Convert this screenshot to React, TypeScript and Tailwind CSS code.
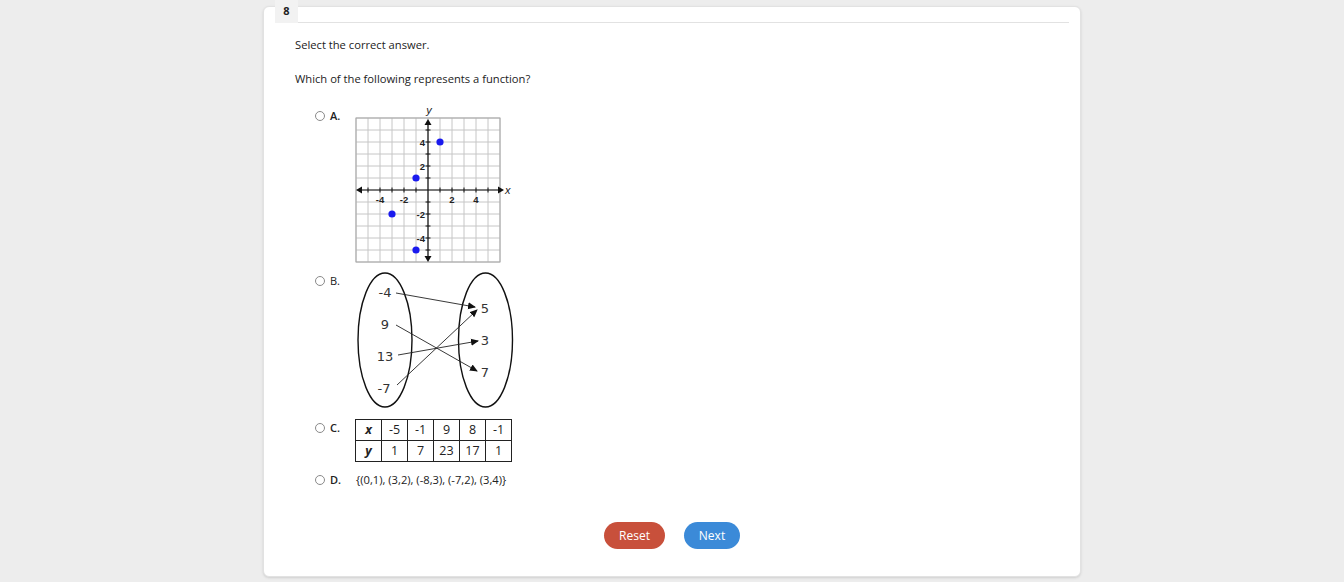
import React from "react";

const font = { fontFamily: '"Open Sans", "Liberation Sans", sans-serif' };

const Radio: React.FC = () => (
  <span className="inline-block w-[10px] h-[10px] rounded-full border border-[#8a8a8a] bg-white shrink-0" />
);

const OptionLabel: React.FC<{ letter: string; bold?: boolean }> = ({ letter, bold = true }) => (
  <div className="flex items-center gap-[5px] h-4 text-[11px] text-[#222]">
    <Radio />
    <span className={bold ? "font-semibold" : "font-normal"}>{letter}.</span>
  </div>
);

// Option A: coordinate grid with four points
const Graph: React.FC = () => {
  const ox = 77;
  const oy = 86;
  const u = 12;
  const lines = Array.from({ length: 13 }, (_, i) => i);
  const ticks = Array.from({ length: 11 }, (_, i) => i - 5).filter((v) => v !== 0);
  const pts: [number, number][] = [
    [1, 4],
    [-1, 1],
    [-3, -2],
    [-1, -5],
  ];
  return (
    <svg width="170" height="166" viewBox="0 0 170 166">
      {lines.map((i) => (
        <line key={"v" + i} x1={5 + i * u} y1={14} x2={5 + i * u} y2={158} stroke="#c6c6c6" strokeWidth="1" />
      ))}
      {lines.map((i) => (
        <line key={"h" + i} x1={5} y1={14 + i * u} x2={149} y2={14 + i * u} stroke="#c6c6c6" strokeWidth="1" />
      ))}
      <rect x="5" y="14" width="144" height="144" fill="none" stroke="#a8a8a8" strokeWidth="1" />
      {/* axes */}
      <line x1="9" y1={oy} x2="150" y2={oy} stroke="#111" strokeWidth="1.2" />
      <line x1={ox} y1="19" x2={ox} y2="153" stroke="#111" strokeWidth="1.2" />
      <polygon points={`5,${oy} 11,${oy - 3.5} 11,${oy + 3.5}`} fill="#111" />
      <polygon points={`153,${oy} 147,${oy - 3.5} 147,${oy + 3.5}`} fill="#111" />
      <polygon points={`${ox},15 ${ox - 3.5},21 ${ox + 3.5},21`} fill="#111" />
      <polygon points={`${ox},158 ${ox - 3.5},152 ${ox + 3.5},152`} fill="#111" />
      {ticks.map((t) => (
        <g key={"t" + t}>
          <line x1={ox + t * u} y1={oy - 2.5} x2={ox + t * u} y2={oy + 2.5} stroke="#111" strokeWidth="1" />
          <line x1={ox - 2.5} y1={oy - t * u} x2={ox + 2.5} y2={oy - t * u} stroke="#111" strokeWidth="1" />
        </g>
      ))}
      <g fontFamily='"Liberation Sans", Arial, sans-serif' fontSize="9.5" fill="#222" fontWeight="bold">
        <text x={ox - 48} y={oy + 13} textAnchor="middle">-4</text>
        <text x={ox - 24} y={oy + 13} textAnchor="middle">-2</text>
        <text x={ox + 24} y={oy + 13} textAnchor="middle">2</text>
        <text x={ox + 48} y={oy + 13} textAnchor="middle">4</text>
        <text x={ox - 3} y={oy - 48 + 3.5} textAnchor="end">4</text>
        <text x={ox - 3} y={oy - 24 + 3.5} textAnchor="end">2</text>
        <text x={ox - 3} y={oy + 24 + 3.5} textAnchor="end">-2</text>
        <text x={ox - 3} y={oy + 48 + 3.5} textAnchor="end">-4</text>
      </g>
      <g fontFamily='"Liberation Sans", Arial, sans-serif' fontSize="11" fontStyle="italic" fill="#222">
        <text x="154" y={oy + 4}>x</text>
        <text x={ox + 1} y="10" textAnchor="middle">y</text>
      </g>
      {pts.map(([x, y]) => (
        <circle key={x + "," + y} cx={ox + x * u} cy={oy - y * u} r="3.6" fill="#1a1aee" />
      ))}
    </svg>
  );
};

// Option B: mapping diagram
const Mapping: React.FC = () => {
  const arrows: [number, number, number, number][] = [
    [45, 23, 124, 37],
    [45, 55, 126, 101],
    [47, 85, 127, 71],
    [46, 115, 126, 40],
  ];
  return (
    <svg width="170" height="142" viewBox="0 0 170 142">
      <defs>
        <marker id="ah" markerWidth="8" markerHeight="8" refX="7" refY="4" orient="auto" markerUnits="userSpaceOnUse">
          <path d="M0,0.5 L8,4 L0,7.5 Z" fill="#111" />
        </marker>
      </defs>
      <ellipse cx="34" cy="70" rx="27" ry="67" fill="none" stroke="#111" strokeWidth="1.4" />
      <ellipse cx="134.5" cy="70" rx="27" ry="67" fill="none" stroke="#111" strokeWidth="1.4" />
      <g fontFamily='"DejaVu Sans", Verdana, sans-serif' fontSize="13" fill="#333">
        <text x="34" y="27" textAnchor="middle">-4</text>
        <text x="34" y="59" textAnchor="middle">9</text>
        <text x="34" y="91" textAnchor="middle">13</text>
        <text x="33" y="123" textAnchor="middle">-7</text>
        <text x="134" y="43" textAnchor="middle">5</text>
        <text x="134" y="75" textAnchor="middle">3</text>
        <text x="134" y="107" textAnchor="middle">7</text>
      </g>
      {arrows.map(([x1, y1, x2, y2], i) => (
        <line key={i} x1={x1} y1={y1} x2={x2} y2={y2} stroke="#222" strokeWidth="0.9" markerEnd="url(#ah)" />
      ))}
    </svg>
  );
};

const xs = ["-5", "-1", "9", "8", "-1"];
const ys = ["1", "7", "23", "17", "1"];

const Table: React.FC = () => (
  <table className="border-collapse text-[12.5px] text-[#222]">
    <tbody>
      <tr>
        <td className="border border-[#222] w-[26px] h-[21px] p-0 text-center font-bold italic">x</td>
        {xs.map((v, i) => (
          <td key={i} className="border border-[#222] w-[26px] h-[21px] p-0 text-center">{v}</td>
        ))}
      </tr>
      <tr>
        <td className="border border-[#222] w-[26px] h-[21px] p-0 text-center font-bold italic">y</td>
        {ys.map((v, i) => (
          <td key={i} className="border border-[#222] w-[26px] h-[21px] p-0 text-center">{v}</td>
        ))}
      </tr>
    </tbody>
  </table>
);

export default function App() {
  return (
    <div className="min-h-[582px] bg-[#ededed] pt-[6px]" style={font}>
      <div className="w-[818px] h-[571px] mx-auto bg-white rounded-[6px] border border-[#e2e2e2] shadow-sm">
        {/* question number tab */}
        <div className="flex -mt-[7px] ml-[11px] mr-[11px] h-[23px]">
          <div className="w-[23px] h-[23px] bg-[#f2f2f2] flex items-center justify-center text-[11px] font-bold text-[#222]">
            8
          </div>
          <div className="flex-1 border-b border-[#e2e2e2]" />
        </div>

        <div className="pl-[31px] text-[11.2px] text-[#222]">
          <p className="mt-[14px] leading-4">Select the correct answer.</p>
          <p className="mt-[18px] leading-4">Which of the following represents a function?</p>

          <div className="ml-[20px] mt-[17px]">
            <div className="flex">
              <div className="w-[36px] pt-[4px]">
                <OptionLabel letter="A" />
              </div>
              <Graph />
            </div>

            <div className="flex">
              <div className="w-[36px] pt-[3px]">
                <OptionLabel letter="B" bold={false} />
              </div>
              <Mapping />
            </div>

            <div className="flex mt-[7px]">
              <div className="w-[40px] pt-[1px]">
                <OptionLabel letter="C" />
              </div>
              <Table />
            </div>

            <div className="flex mt-[10px]">
              <div className="w-[41px]">
                <OptionLabel letter="D" />
              </div>
              <span className="leading-4">{"{(0,1), (3,2), (-8,3), (-7,2), (3,4)}"}</span>
            </div>
          </div>
        </div>

        <div className="flex justify-center gap-[19px] mt-[34px]">
          <button className="w-[61px] h-[27px] rounded-full bg-[#c8503b] text-white text-[12px]">Reset</button>
          <button className="w-[56px] h-[27px] rounded-full bg-[#3b8ad8] text-white text-[12px]">Next</button>
        </div>
      </div>
    </div>
  );
}
